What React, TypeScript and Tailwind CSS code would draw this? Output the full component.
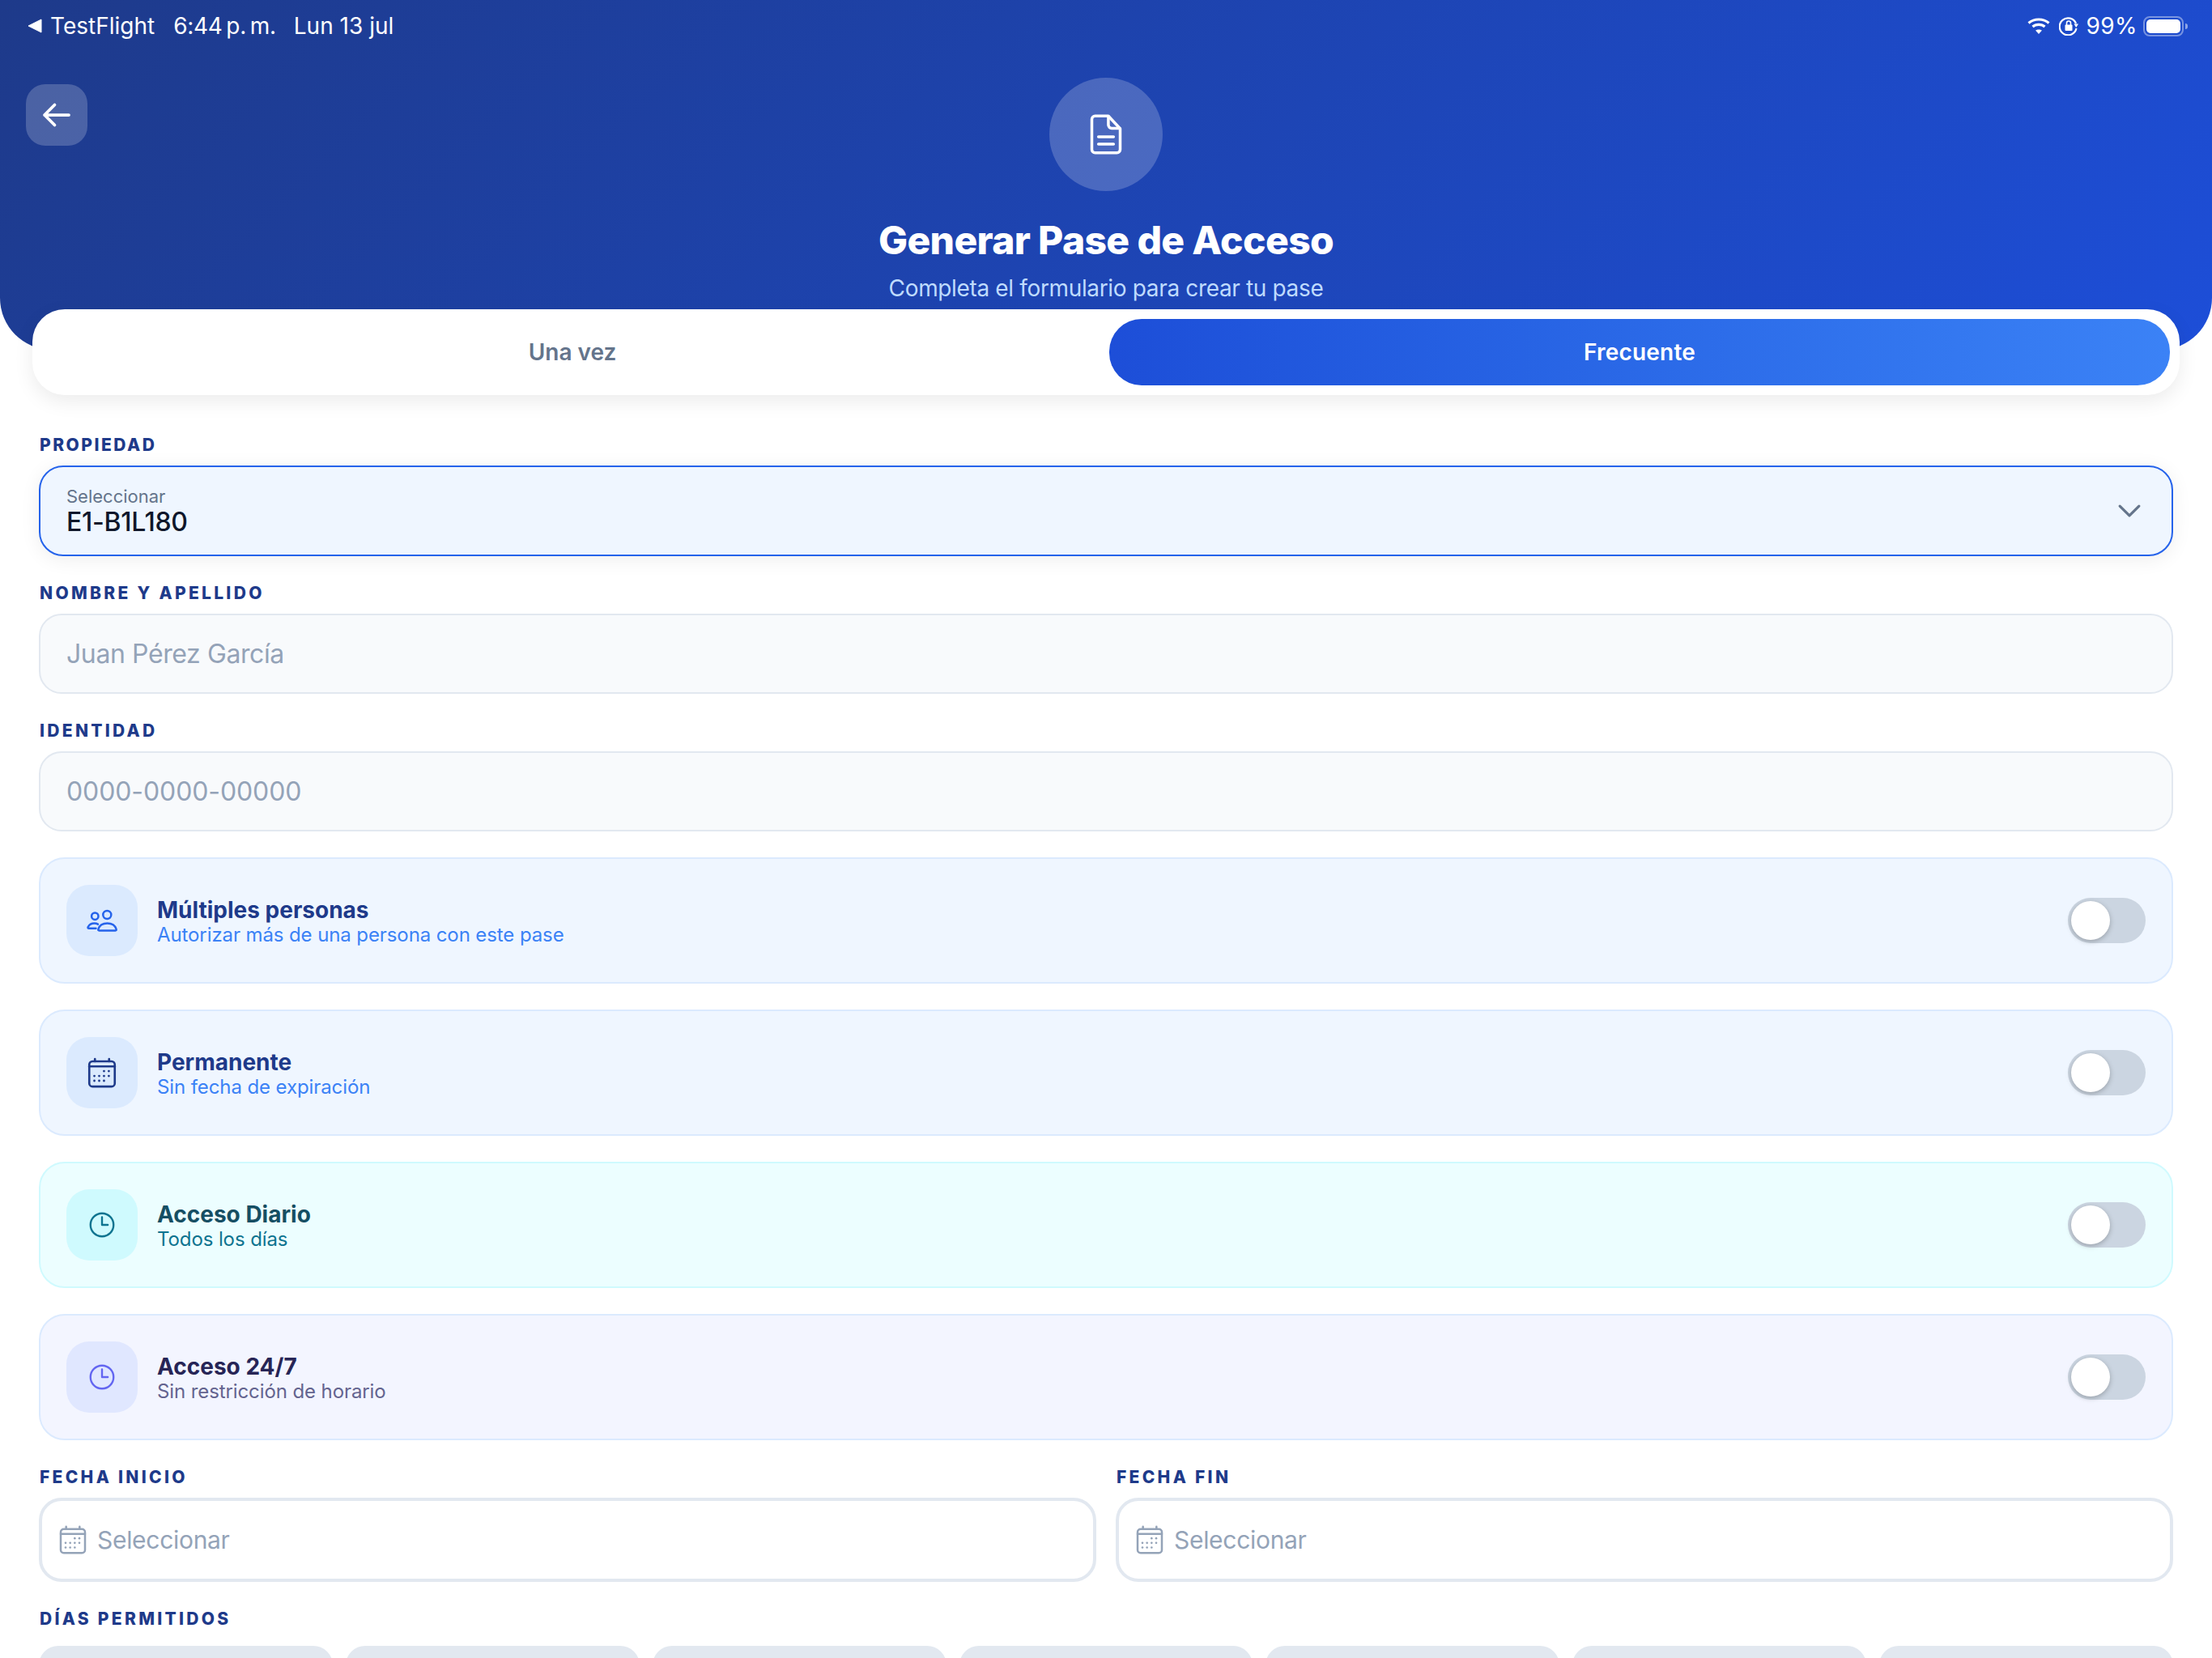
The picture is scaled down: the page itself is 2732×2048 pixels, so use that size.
import type { ReactNode } from 'react';
import { HiOutlineArrowLeft, HiOutlineChevronDown, HiOutlineClock } from 'react-icons/hi2';

function StatusBar() {
  return (
    <div className="flex h-[64px] items-center justify-between pl-[34px] pr-[30px] text-[28px] text-white">
      <div className="flex items-center">
        <svg viewBox="0 0 18 18" className="h-[18px] w-[18px]">
          <path d="M17 1 L17 17 L1 9 Z" fill="white" stroke="white" strokeLinejoin="round" />
        </svg>
        <span className="ml-[10px]">TestFlight</span>
        <span className="ml-[23px] tracking-[-0.3px]">6:44{'\u202F'}p.{'\u202F'}m.</span>
        <span className="ml-[22px]">Lun 13 jul</span>
      </div>
      <div className="flex items-center">
        {/* wifi */}
        <svg viewBox="0 0 28 20" className="h-[20px] w-[28px]" fill="none" stroke="white" strokeWidth="3.2">
          <path d="M1.5 6.5 C8.5 0.5 19.5 0.5 26.5 6.5" />
          <path d="M6.5 11 C10.5 7.5 17.5 7.5 21.5 11" />
          <path d="M14 20 L10 15.5 C12 14 16 14 18 15.5 Z" fill="white" stroke="none" />
        </svg>
        {/* orientation lock */}
        <svg viewBox="0 0 24 24" className="ml-[11px] h-[24px] w-[24px]" fill="none" stroke="white" strokeWidth="2.2">
          <path d="M21 9 A10.5 10.5 0 1 0 21.5 15" />
          <path d="M18.5 9.5 L24 9.5 L21.2 14 Z" fill="white" stroke="none" />
          <rect x="7.5" y="10.5" width="9" height="7.5" rx="1" fill="white" stroke="none" />
          <path d="M9.5 11 V8.5 A2.5 2.5 0 0 1 14.5 8.5 V11" strokeWidth="1.6" />
        </svg>
        <span className="ml-[10px] tracking-[0.4px]">99%</span>
        <div className="ml-[7px] flex items-center">
          <div className="h-[25px] w-[50px] rounded-[8px] border-2 border-white/40 p-[2px]">
            <div className="h-full w-full rounded-[5px] bg-white" />
          </div>
          <div className="ml-[2px] h-[7px] w-[3px] rounded-r-full bg-white/50" />
        </div>
      </div>
    </div>
  );
}

function DocumentIcon() {
  return (
    <svg viewBox="0 0 24 24" className="h-[56px] w-[56px]" fill="none" stroke="white" strokeWidth="1.5" strokeLinecap="round" strokeLinejoin="round">
      <path d="M6.25 2.25 H13.25 L19.5 9 V20 A1.75 1.75 0 0 1 17.75 21.75 H6.25 A1.75 1.75 0 0 1 4.5 20 V4 A1.75 1.75 0 0 1 6.25 2.25 Z" />
      <path d="M13.25 2.5 V7 A1.75 1.75 0 0 0 15 8.75 H19.25" />
      <path d="M8 13.3 H16" />
      <path d="M8 17.1 H16" />
    </svg>
  );
}

function PeopleIcon() {
  return (
    <svg viewBox="0 0 44 44" className="h-[44px] w-[44px]" fill="none" stroke="#2563eb" strokeWidth="2.5" strokeLinecap="round" strokeLinejoin="round">
      <circle cx="13.3" cy="16.7" r="4.2" />
      <circle cx="28.3" cy="15" r="5" />
      <path d="M18.5 34.4 C17.4 34.4 17 33.6 17.4 32.6 C18.8 28 23 25.4 28.5 25.4 C34 25.4 38.2 28 39.6 32.6 C40 33.6 39.6 34.4 38.5 34.4 Z" />
      <path d="M14.5 31.8 H6 C4.6 31.8 4.2 31 4.8 30 C6.2 27 9 25.6 12.5 25.6 C14 25.6 15.8 25.9 17 26.6" />
    </svg>
  );
}

const calendarDots = [
  [13.4, 10.9],
  [16.8, 10.9],
  [6.6, 14.3],
  [10, 14.3],
  [13.4, 14.3],
  [16.8, 14.3],
  [6.6, 17.7],
  [10, 17.7],
  [13.4, 17.7],
];

function CalendarIcon({ className }: { className: string }) {
  return (
    <svg viewBox="0 0 24 24" className={className} fill="none" stroke="currentColor" strokeWidth="1.5" strokeLinecap="round">
      <path d="M7 2.25 V4 M17 2.25 V4" />
      <rect x="3" y="4" width="18" height="17.75" rx="2.25" />
      <path d="M3 7.6 H21" />
      {calendarDots.map(([x, y]) => (
        <circle key={`${x}-${y}`} cx={x} cy={y} r="0.8" fill="currentColor" stroke="none" />
      ))}
    </svg>
  );
}

function Header() {
  return (
    <header className="h-[432px] rounded-b-[64px] bg-[linear-gradient(135deg,#1e3a8a,#1d4ed8)]">
      <StatusBar />
      <div className="grid grid-cols-[76px_1fr_76px] px-8 pt-8">
        <div className="mt-2 flex h-[76px] w-[76px] items-center justify-center rounded-[24px] bg-white/20">
          <HiOutlineArrowLeft className="h-[40px] w-[40px] text-white [stroke-width:2.25]" />
        </div>
        <div className="flex flex-col items-center">
          <div className="flex h-[140px] w-[140px] items-center justify-center rounded-full bg-white/20">
            <DocumentIcon />
          </div>
          <h1 className="mt-[32px] text-[48px] font-extrabold leading-[58px] tracking-[-0.65px] text-white">Generar Pase de Acceso</h1>
          <p className="mt-[14px] text-[28px] leading-[32px] tracking-[-0.35px] text-[#bfdbfe]">Completa el formulario para crear tu pase</p>
        </div>
      </div>
    </header>
  );
}

function Tabs() {
  return (
    <div className="relative mx-10 -mt-[50px] flex h-[106px] gap-2 rounded-[40px] bg-white p-3 shadow-[0_8px_24px_rgba(0,0,0,0.08)]">
      <div className="flex flex-1 items-center justify-center text-[28px] font-semibold text-[#64748b]">Una vez</div>
      <div className="flex flex-1 items-center justify-center rounded-[40px] bg-gradient-to-r from-[#1d4ed8] to-[#3b82f6] text-[28px] font-semibold tracking-[0.2px] text-white">
        Frecuente
      </div>
    </div>
  );
}

function Label({ children, tight }: { children: ReactNode; tight?: boolean }) {
  return (
    <div className={`pl-px text-[21px] font-extrabold leading-[32px] text-[#1e3a8a] ${tight ? 'tracking-[2.5px]' : 'tracking-[3.3px]'}`}>
      {children}
    </div>
  );
}

function TextField({ label, placeholder, spacing }: { label: string; placeholder: string; spacing: string }) {
  return (
    <div className="mt-[30px]">
      <Label>{label}</Label>
      <div className={`mt-[9px] flex h-[99px] items-center rounded-[28px] border-2 border-[#e2e8f0] bg-[#f8fafc] px-[32px] text-[32px] text-[#94a3b8] ${spacing}`}>
        {placeholder}
      </div>
    </div>
  );
}

type CardProps = {
  icon: ReactNode;
  title: string;
  subtitle: string;
  card: string;
  iconBox: string;
  titleColor: string;
  subtitleColor: string;
};

function ToggleCard({ icon, title, subtitle, card, iconBox, titleColor, subtitleColor }: CardProps) {
  return (
    <div className={`flex h-[156px] items-center rounded-[32px] border-2 px-[32px] ${card}`}>
      <div className={`flex h-[88px] w-[88px] items-center justify-center rounded-[28px] ${iconBox}`}>{icon}</div>
      <div className="ml-[24px] flex-1">
        <div className={`text-[28px] font-bold leading-[36px] ${titleColor}`}>{title}</div>
        <div className={`text-[24px] leading-[26px] tracking-[-0.1px] ${subtitleColor}`}>{subtitle}</div>
      </div>
      <div className="flex h-[56px] w-[96px] items-center rounded-full bg-[#cbd5e1] p-1">
        <div className="h-[48px] w-[48px] rounded-full bg-white shadow-[0_2px_6px_rgba(0,0,0,0.25)]" />
      </div>
    </div>
  );
}

function DateField({ label }: { label: string }) {
  return (
    <div>
      <Label>{label}</Label>
      <div className="mt-[9px] flex h-[104px] items-center gap-[10px] rounded-[28px] border-4 border-[#e2e8f0] bg-white px-[18px] text-[30px] tracking-[-0.3px] text-[#94a3b8]">
        <CalendarIcon className="h-[40px] w-[40px] text-[#94a3b8]" />
        <span>Seleccionar</span>
      </div>
    </div>
  );
}

export default function App() {
  return (
    <div className="h-[2048px] w-[2732px] overflow-hidden bg-white font-[Inter,sans-serif]">
      <Header />
      <Tabs />
      <main className="mt-[46px] px-12">
        <Label tight>PROPIEDAD</Label>
        <div className="mt-[9px] flex h-[112px] items-center justify-between rounded-[30px] border-2 border-[#2563eb] bg-[#eff6ff] pl-[32px] pr-[33px] shadow-[0_4px_24px_rgba(0,0,0,0.07)]">
          <div>
            <div className="text-[22px] leading-[28px] text-[#64748b]">Seleccionar</div>
            <div className="text-[32px] font-medium leading-[36px] tracking-[-0.3px] text-[#0f172a]">E1-B1L180</div>
          </div>
          <HiOutlineChevronDown className="h-[38px] w-[38px] text-[#64748b] [stroke-width:2]" />
        </div>

        <TextField label="NOMBRE Y APELLIDO" placeholder="Juan Pérez García" spacing="tracking-[-0.4px]" />
        <TextField label="IDENTIDAD" placeholder="0000-0000-00000" spacing="tracking-[-0.1px]" />

        <div className="mt-[32px] flex flex-col gap-[32px]">
          <ToggleCard
            icon={<PeopleIcon />}
            title="Múltiples personas"
            subtitle="Autorizar más de una persona con este pase"
            card="border-[#dbeafe] bg-[#eff6ff]"
            iconBox="bg-[#dbeafe]"
            titleColor="text-[#1e3a8a]"
            subtitleColor="text-[#3b82f6]"
          />
          <ToggleCard
            icon={<CalendarIcon className="h-[42px] w-[42px] text-[#1e3a8a]" />}
            title="Permanente"
            subtitle="Sin fecha de expiración"
            card="border-[#dbeafe] bg-[#eff6ff]"
            iconBox="bg-[#dbeafe]"
            titleColor="text-[#1e3a8a]"
            subtitleColor="text-[#3b82f6]"
          />
          <ToggleCard
            icon={<HiOutlineClock className="h-[38px] w-[38px] text-[#0e7490]" />}
            title="Acceso Diario"
            subtitle="Todos los días"
            card="border-[#cffafe] bg-[#ecfeff]"
            iconBox="bg-[#cffafe]"
            titleColor="text-[#164e63]"
            subtitleColor="text-[#0e7490]"
          />
          <ToggleCard
            icon={<HiOutlineClock className="h-[38px] w-[38px] text-[#6366f1]" />}
            title="Acceso 24/7"
            subtitle="Sin restricción de horario"
            card="border-[#dbeafe] bg-[#f3f5ff]"
            iconBox="bg-[#e0e7ff]"
            titleColor="text-[#272556]"
            subtitleColor="text-[#64648f]"
          />
        </div>

        <div className="mt-[30px] grid grid-cols-2 gap-[24px]">
          <DateField label="FECHA INICIO" />
          <DateField label="FECHA FIN" />
        </div>

        <div className="mt-[30px]">
          <Label>DÍAS PERMITIDOS</Label>
          <div className="mt-[17px] grid grid-cols-7 gap-4">
            {['L', 'M', 'X', 'J', 'V', 'S', 'D'].map((d) => (
              <div key={d} className="h-[100px] rounded-[24px] bg-[#e2e8f0]" />
            ))}
          </div>
        </div>
      </main>
    </div>
  );
}
